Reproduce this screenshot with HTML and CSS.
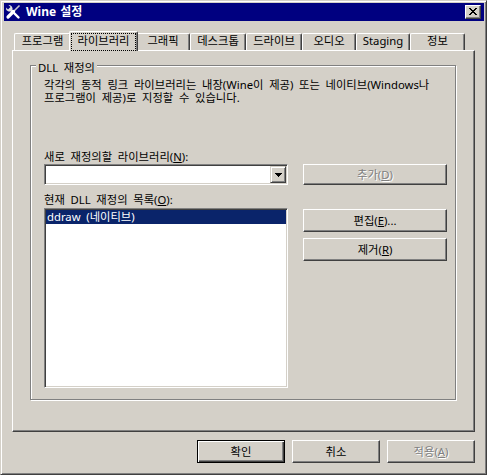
FILE: index.html
```html
<!DOCTYPE html>
<html lang="ko">
<head>
<meta charset="utf-8">
<title>Wine 설정</title>
<link rel="stylesheet" href="styles.css">
</head>
<body>
<div class="window">
  <div class="titlebar">
    <svg class="title-icon" width="16" height="16" viewBox="0 0 16 16">
      <path d="M14.5 1.5 L9 7" stroke="#c8c8c8" stroke-width="1.6" fill="none"/>
      <path d="M8.5 7.5 L3 13" stroke="#ffffff" stroke-width="3.2" stroke-linecap="round" fill="none"/>
      <path d="M5.5 5.5 L13.5 13.5" stroke="#ffffff" stroke-width="2.4" stroke-linecap="round" fill="none"/>
      <path d="M1 3.5 L3 5.5 L5.5 3 L3.5 1 A3.6 3.6 0 0 1 7 6.5 L6.5 7 A3.6 3.6 0 0 1 1 3.5 Z" fill="#e0e0e0"/>
    </svg>
    <span class="title-text">Wine 설정</span>
    <span class="close-btn">
      <svg width="8" height="7" viewBox="0 0 8 7"><path d="M0 0h2v1H0z M6 0h2v1H6z M1 1h2v1H1z M5 1h2v1H5z M2 2h4v1H2z M3 3h2v1H3z M2 4h4v1H2z M1 5h2v1H1z M5 5h2v1H5z M0 6h2v1H0z M6 6h2v1H6z" fill="#000"/></svg>
    </span>
  </div>
  <div class="body">
    <div class="tabs">
      <div class="tab">프로그램</div>
      <div class="tab tab-active"><span class="focus">라이브러리</span></div>
      <div class="tab">그래픽</div>
      <div class="tab">데스크톱</div>
      <div class="tab">드라이브</div>
      <div class="tab">오디오</div>
      <div class="tab">Staging</div>
      <div class="tab">정보</div>
    </div>
    <div class="panel">
      <div class="group">
        <div class="group-title">DLL 재정의</div>
        <p class="desc">각각의 동적 링크 라이브러리는 내장(Wine이 제공) 또는 네이티브(Windows나<br>프로그램이 제공)로 지정할 수 있습니다.</p>
        <div class="form">
          <div class="label label-new">새로 재정의할 라이브러리(<u>N</u>):</div>
          <div class="combo">
            <span class="combo-btn">
              <svg width="7" height="4" viewBox="0 0 7 4"><path d="M0 0h7v1H0z M1 1h5v1H1z M2 2h3v1H2z M3 3h1v1H3z" fill="#000"/></svg>
            </span>
          </div>
          <button class="btn btn-disabled btn-add">추가(<u>D</u>)</button>
          <div class="label label-list">현재 DLL 재정의 목록(<u>O</u>):</div>
          <div class="list">
            <div class="list-item selected">ddraw (네이티브)</div>
          </div>
          <div class="side">
            <button class="btn">편집(<u>E</u>)...</button>
            <button class="btn">제거(<u>R</u>)</button>
          </div>
        </div>
      </div>
    </div>
    <div class="actions">
      <button class="btn btn-default">확인</button>
      <button class="btn">취소</button>
      <button class="btn btn-disabled">적용(<u>A</u>)</button>
    </div>
  </div>
</div>
</body>
</html>
```
FILE: styles.css
```css
* { box-sizing: border-box; }
html, body { margin: 0; padding: 0; }
body {
  background: #d4d0c8;
  font-family: "Noto Sans", "Noto Sans CJK KR", sans-serif;
  font-size: 11.3px;
  line-height: 13px;
  word-spacing: 2.8px;
  color: #000;
}
u { text-decoration: underline; text-underline-offset: 1px; }

.window {
  width: 487px;
  height: 475px;
  border: 1px solid;
  border-color: #d4d0c8 #404040 #404040 #d4d0c8;
  box-shadow: inset 1px 1px #fff, inset -1px -1px #808080;
  padding: 2px 2px 2px 3px;
  display: flex;
  flex-direction: column;
  background: #d4d0c8;
}

.titlebar {
  height: 18px;
  flex: none;
  background: #000080;
  color: #fff;
  display: flex;
  align-items: center;
  padding: 0 3px 0 1px;
}
.title-icon { flex: none; display: block; }
.title-text {
  flex: 1;
  margin-left: 5px;
  font-weight: bold;
  font-size: 12px;
  line-height: 18px;
  word-spacing: 1px;
}
.close-btn {
  width: 16px;
  height: 14px;
  background: #d4d0c8;
  border: 1px solid;
  border-color: #fff #404040 #404040 #fff;
  box-shadow: inset -1px -1px #808080;
  display: flex;
  align-items: center;
  justify-content: center;
  padding: 0 1px 1px 0;
}
.close-btn svg { display: block; }

.body {
  flex: 1;
  display: flex;
  flex-direction: column;
  padding: 10px 9px 9px 8px;
}

.tabs {
  display: flex;
  align-items: flex-end;
  height: 19px;
  padding-left: 2px;
  position: relative;
  z-index: 1;
}
.tab {
  height: 17px;
  border: 1px solid;
  border-bottom: none;
  border-color: #fff #404040 #404040 #fff;
  border-radius: 2px 2px 0 0;
  box-shadow: inset -1px 0 #808080;
  text-align: center;
  white-space: nowrap;
  background: #d4d0c8;
}
.tab:nth-child(1) { width: 57px; }
.tab:nth-child(2) { width: 69px; }
.tab:nth-child(3) { width: 54px; }
.tab:nth-child(4) { width: 56px; }
.tab:nth-child(5) { width: 56px; }
.tab:nth-child(6) { width: 54px; }
.tab:nth-child(7) { width: 54px; }
.tab:nth-child(8) { width: 55px; }
.tab-active {
  height: 20px;
  margin: 0 -2px -1px;
  position: relative;
  z-index: 2;
}
.focus {
  display: block;
  height: 18px;
  margin: 1px 1px 0 1px;
  border: 1px dotted #000;
  line-height: 13px;
}

.panel {
  flex: 1;
  border: 1px solid;
  border-color: #fff #404040 #404040 #fff;
  box-shadow: inset -1px -1px #808080;
  padding: 14px 18px 0 17px;
}

.group {
  border: 1px solid #808080;
  box-shadow: inset 1px 1px #fff, 1px 1px #fff;
  padding: 0 8px 11px 13px;
}
.group-title {
  width: max-content;
  margin: -5px 0 0 -8px;
  padding: 0 2px;
  background: #d4d0c8;
}
.desc {
  margin: 4px 0 0;
  line-height: 13px;
  white-space: nowrap;
}

.form {
  display: grid;
  grid-template-columns: 244px 144px;
  column-gap: 15px;
  grid-template-areas:
    "l1 ."
    "combo add"
    "l2 ."
    "list side";
}
.label-new { grid-area: l1; margin-top: 46px; }
.label-list { grid-area: l2; margin-top: 8px; }

.combo {
  grid-area: combo;
  margin-top: 1px;
  height: 21px;
  background: #fff;
  border: 1px solid;
  border-color: #808080 #fff #fff #808080;
  box-shadow: inset 1px 1px #404040, inset -1px -1px #d4d0c8;
  padding: 1px;
  display: flex;
  justify-content: flex-end;
}
.combo-btn {
  width: 16px;
  height: 17px;
  background: #d4d0c8;
  border: 1px solid;
  border-color: #d4d0c8 #404040 #404040 #d4d0c8;
  box-shadow: inset 1px 1px #fff, inset -1px -1px #808080;
  display: flex;
  align-items: center;
  justify-content: center;
}
.combo-btn svg { display: block; }

.btn {
  font: inherit;
  line-height: 13px;
  color: #000;
  background: #d4d0c8;
  border: 1px solid;
  border-color: #fff #404040 #404040 #fff;
  box-shadow: inset -1px -1px #808080;
  border-radius: 0;
  padding: 0;
  height: 23px;
  margin: 0;
  cursor: default;
}
.btn-disabled {
  color: #808080;
  text-shadow: 1px 1px #fff;
}
.btn-default {
  border: 1px solid #000;
  box-shadow: inset 1px 1px #fff, inset -1px -1px #404040, inset -2px -2px #808080;
}
.btn-add {
  grid-area: add;
  margin-top: 1px;
  height: 21px;
}

.list {
  grid-area: list;
  margin-top: 2px;
  height: 180px;
  background: #fff;
  border: 1px solid;
  border-color: #808080 #fff #fff #808080;
  box-shadow: inset 1px 1px #404040, inset -1px -1px #d4d0c8;
  padding: 1px;
}
.list-item {
  height: 14px;
  line-height: 14px;
  padding-left: 1px;
  white-space: nowrap;
}
.list-item.selected {
  background: #0a246a;
  color: #fff;
}

.side {
  grid-area: side;
  margin-top: 3px;
  display: flex;
  flex-direction: column;
  gap: 6px;
}

.actions {
  display: flex;
  justify-content: flex-end;
  gap: 7px;
  margin-top: 8px;
}
.actions .btn { width: 88px; height: 23px; }
```
